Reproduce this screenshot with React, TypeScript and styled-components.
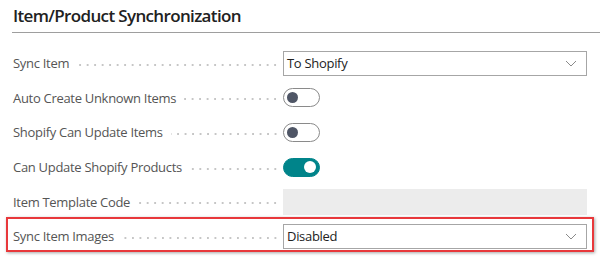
import React from "react";
import styled, { createGlobalStyle } from "styled-components";

const Global = createGlobalStyle`
  html, body { margin: 0; padding: 0; background: #ffffff; }
  body { font-family: "Segoe UI", "Open Sans", "Noto Sans", sans-serif; }
`;

const Page = styled.div`
  width: 600px;
  height: 259px;
  overflow: hidden;
  background: #fff;
`;

const Header = styled.div`
  margin-left: 12px;
  height: 33px;
  border-bottom: 1px solid #9e9e9e;
  box-sizing: border-box;
  display: flex;
  align-items: flex-end;
`;

const Title = styled.h2`
  margin: 0 0 5px 1px;
  font-size: 17px;
  font-weight: 600;
  color: #212121;
  letter-spacing: -0.65px;
`;

const Fields = styled.div`
  padding-top: 13px;
  display: flex;
  flex-direction: column;
`;

const Row = styled.div<{ $highlight?: boolean }>`
  position: relative;
  height: 34.6px;
  display: grid;
  grid-template-columns: 270px 304px;
  align-items: center;
  padding-left: 13px;
  ${(p) =>
    p.$highlight &&
    `
    &::after {
      content: "";
      position: absolute;
      left: 6px;
      top: -2px;
      width: 588px;
      height: 35px;
      box-sizing: border-box;
      border: 2px solid #e8383b;
      box-shadow: 1px 1px 3px rgba(0,0,0,0.35);
      pointer-events: none;
    }
  `}
`;

const Label = styled.div`
  display: flex;
  align-items: center;
  font-size: 13px;
  letter-spacing: -0.3px;
  color: #555555;
  white-space: nowrap;
  padding-right: 4px;
`;

const Leader = styled.span`
  flex: 1;
  height: 2px;
  margin-left: 8px;
  margin-top: 3px;
  background-image: radial-gradient(circle, #c6c6c6 0.9px, transparent 1px);
  background-size: 7.5px 2px;
  background-position: right center;
  background-repeat: repeat-x;
`;

const Select = styled.div`
  height: 25px;
  box-sizing: border-box;
  border: 1px solid #a6a6a6;
  display: flex;
  align-items: center;
  justify-content: space-between;
  padding: 0 9px 0 3px;
  font-size: 13px;
  letter-spacing: -0.3px;
  color: #222;
`;

const Chevron = () => (
  <svg width="12" height="7" viewBox="0 0 12 7">
    <path d="M1 1 L6 6 L11 1" fill="none" stroke="#8a8a8a" strokeWidth="1" />
  </svg>
);

const Disabled = styled.div`
  height: 26px;
  background: #ececec;
`;

const Toggle = styled.div<{ $on?: boolean }>`
  width: 37px;
  height: 19px;
  box-sizing: border-box;
  border-radius: 10px;
  border: 1px solid ${(p) => (p.$on ? "#00848a" : "#8a8a8a")};
  background: ${(p) => (p.$on ? "#00848a" : "#fff")};
  display: flex;
  align-items: center;
  justify-content: ${(p) => (p.$on ? "flex-end" : "flex-start")};
  padding: 0 3px;
`;

const Knob = styled.span<{ $on?: boolean }>`
  width: ${(p) => (p.$on ? 12 : 11)}px;
  height: ${(p) => (p.$on ? 12 : 11)}px;
  border-radius: 50%;
  background: ${(p) => (p.$on ? "#ffffff" : "#4f5666")};
`;

const rows: { label: string; kind: "select" | "toggle" | "disabled"; value?: string; on?: boolean; hl?: boolean }[] = [
  { label: "Sync Item", kind: "select", value: "To Shopify" },
  { label: "Auto Create Unknown Items", kind: "toggle", on: false },
  { label: "Shopify Can Update Items", kind: "toggle", on: false },
  { label: "Can Update Shopify Products", kind: "toggle", on: true },
  { label: "Item Template Code", kind: "disabled" },
  { label: "Sync Item Images", kind: "select", value: "Disabled", hl: true },
];

export default function App() {
  return (
    <Page>
      <Global />
      <Header>
        <Title>Item/Product Synchronization</Title>
      </Header>
      <Fields>
        {rows.map((r) => (
          <Row key={r.label} $highlight={r.hl}>
            <Label>
              {r.label}
              <Leader />
            </Label>
            <div>
              {r.kind === "select" && (
                <Select>
                  <span>{r.value}</span>
                  <Chevron />
                </Select>
              )}
              {r.kind === "toggle" && (
                <Toggle $on={r.on}>
                  <Knob $on={r.on} />
                </Toggle>
              )}
              {r.kind === "disabled" && <Disabled />}
            </div>
          </Row>
        ))}
      </Fields>
    </Page>
  );
}
